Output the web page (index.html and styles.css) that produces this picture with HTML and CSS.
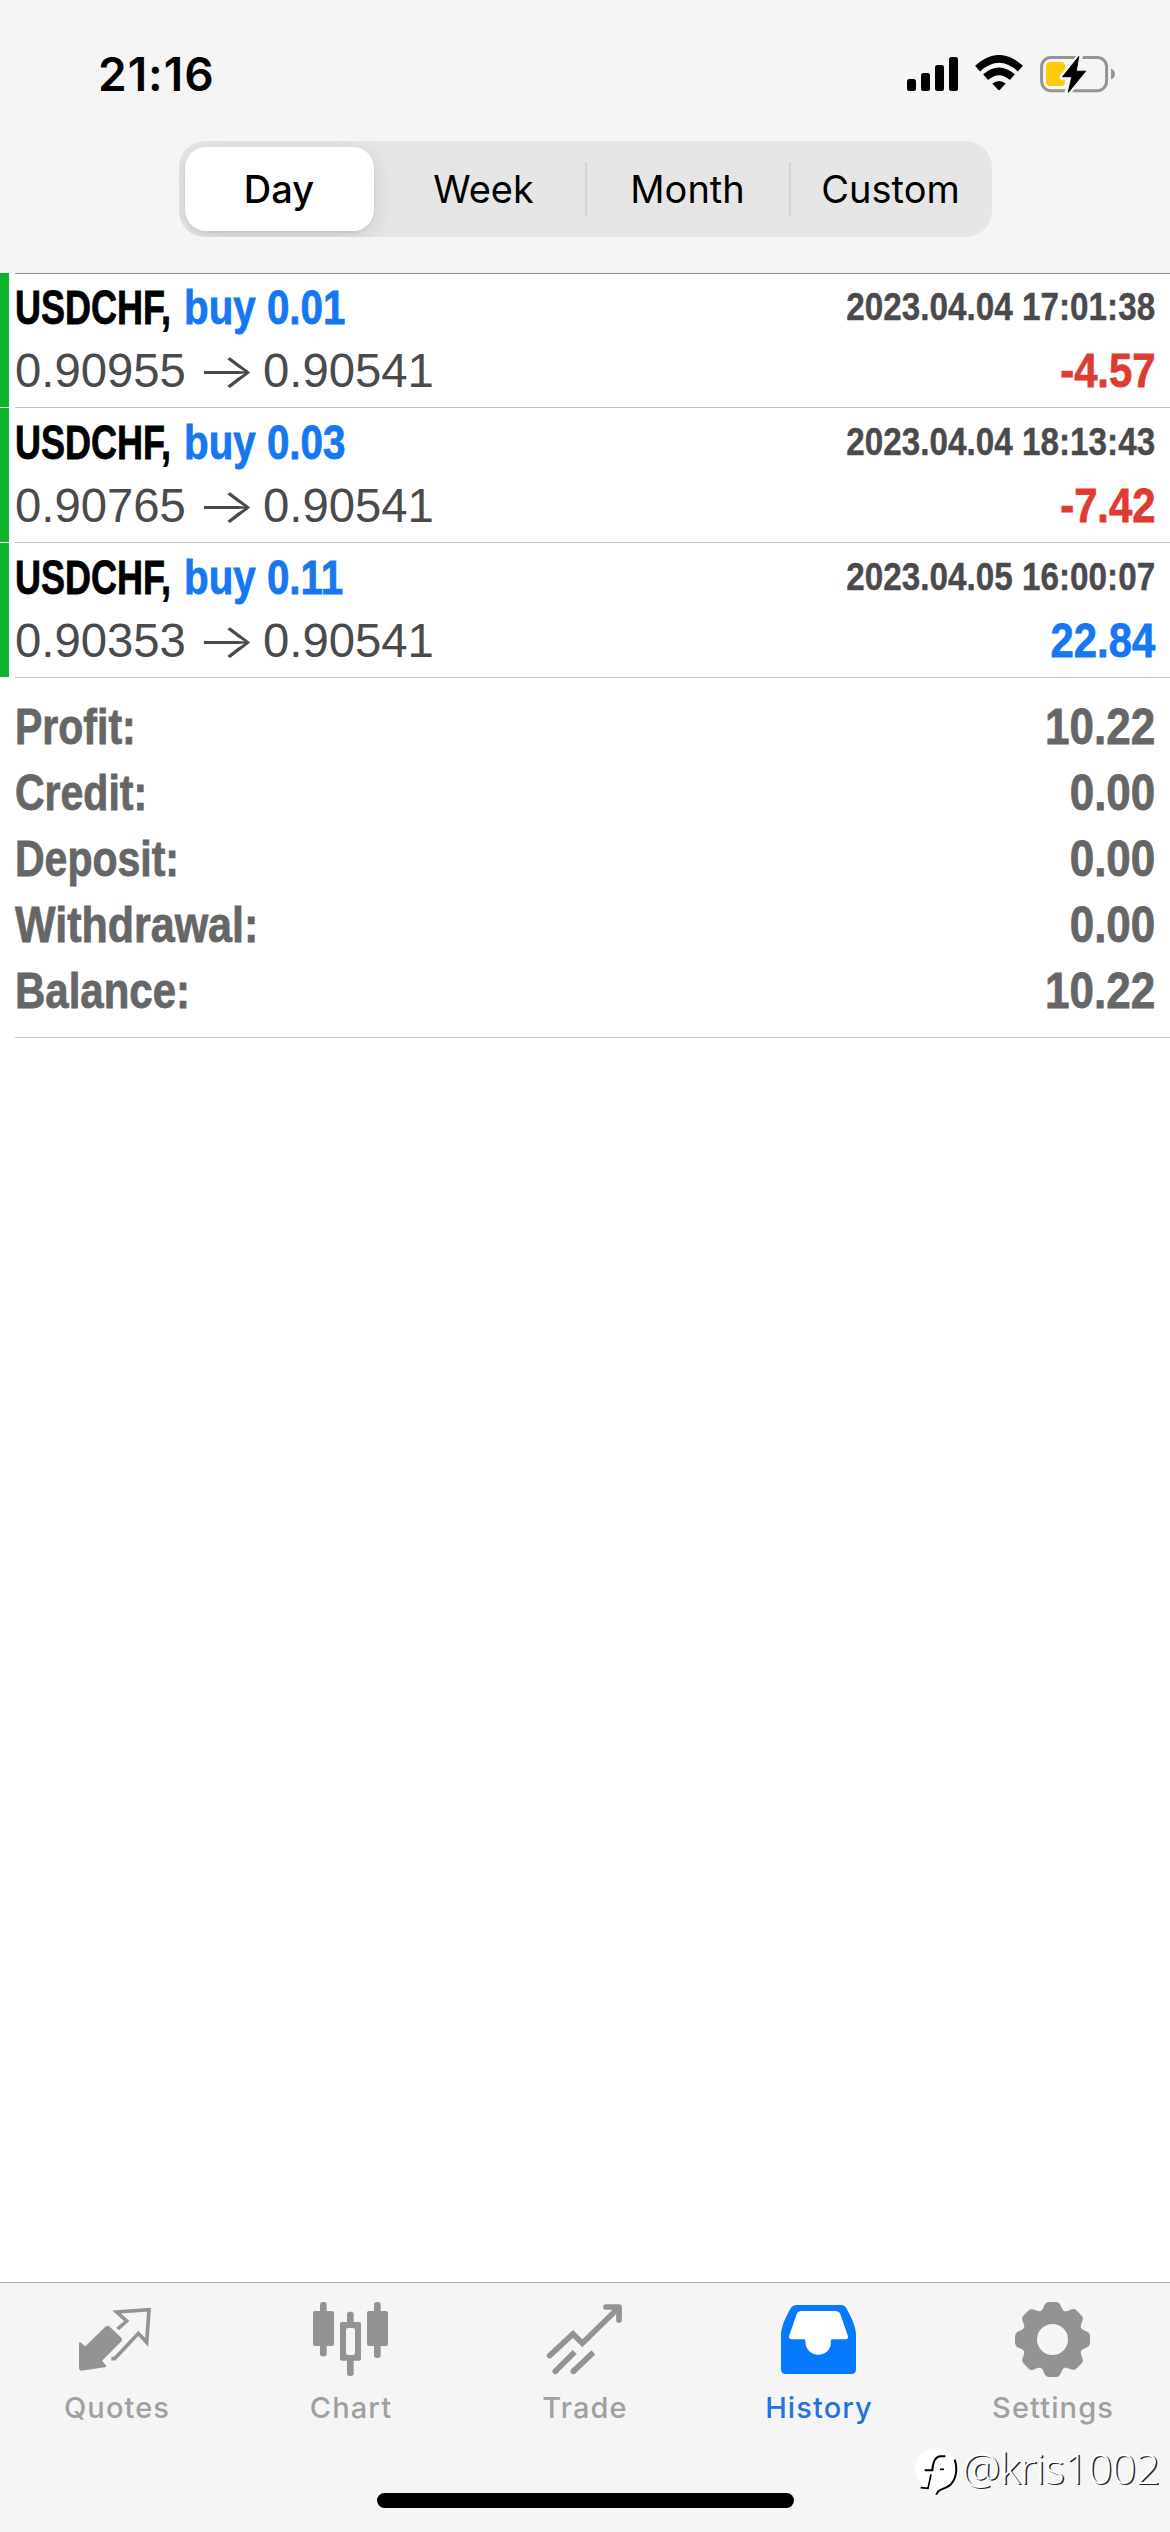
FILE: index.html
```html
<!DOCTYPE html>
<html lang="en">
<head>
<meta charset="utf-8">
<title>History</title>
<link rel="stylesheet" href="styles.css">
</head>
<body>
<div class="screen">
  <header class="topbar">
    <div class="status">
      <span class="time">21:16</span>
      <div class="status-icons">
        <svg class="signal" viewBox="0 0 51 34" width="51" height="34"><rect x="0" y="22" width="9" height="12" rx="2.5"/><rect x="14" y="16" width="9" height="18" rx="2.5"/><rect x="28" y="8" width="9" height="26" rx="2.5"/><rect x="42" y="0" width="9" height="34" rx="2.5"/></svg>
        <svg class="wifi" viewBox="0 0 48 36" width="48" height="36"><g fill="none" stroke="#000" stroke-width="7.6"><path d="M2.6 13.6Q24-5.8 45.4 13.6"/><path d="M10.6 22.2Q24 10.6 37.400 22.200"/></g><path d="M17.300 28.600Q24 23.400 30.700 28.600L25.200 34.600Q24 35.800 22.800 34.600Z"/></svg>
        <svg class="battery" viewBox="0 0 76 40" width="76" height="40"><rect x="1.600" y="3.400" width="65" height="33.400" rx="9.500" fill="none" stroke="#949494" stroke-width="3"/><path d="M71 14.500Q75 16 75 20Q75 24 71 25.500Z" fill="#949494"/><rect x="6" y="8" width="19" height="24" rx="4" fill="#fbcb0a"/><path d="M40 2L22.400 23H31.400L27.400 39L45.600 17H36.200Z" fill="#f5f5f5" stroke="#f5f5f5" stroke-width="6" stroke-linejoin="round"/><path d="M38.800 2.500L22.600 22.700H31.800L28.300 38.300L45.600 17.200H36.200Z" stroke="#000" stroke-linejoin="round"/></svg>
      </div>
    </div>
    <nav class="segments">
      <span class="segment selected">Day</span>
      <span class="segment">Week</span>
      <span class="segment ruled">Month</span>
      <span class="segment ruled">Custom</span>
    </nav>
  </header>

  <main class="content">
    <section class="deals">
      <article class="deal">
        <div class="deal-body">
          <div class="line"><span class="title"><span class="symbol">USDCHF,</span><span class="side">buy 0.01</span></span><time class="date">2023.04.04 17:01:38</time></div>
          <div class="line"><span class="prices"><span class="open">0.90955</span><span class="arrow">→</span><span class="close">0.90541</span></span><span class="result loss">-4.57</span></div>
        </div>
      </article>
      <article class="deal">
        <div class="deal-body">
          <div class="line"><span class="title"><span class="symbol">USDCHF,</span><span class="side">buy 0.03</span></span><time class="date">2023.04.04 18:13:43</time></div>
          <div class="line"><span class="prices"><span class="open">0.90765</span><span class="arrow">→</span><span class="close">0.90541</span></span><span class="result loss">-7.42</span></div>
        </div>
      </article>
      <article class="deal">
        <div class="deal-body">
          <div class="line"><span class="title"><span class="symbol">USDCHF,</span><span class="side">buy 0.11</span></span><time class="date">2023.04.05 16:00:07</time></div>
          <div class="line"><span class="prices"><span class="open">0.90353</span><span class="arrow">→</span><span class="close">0.90541</span></span><span class="result gain">22.84</span></div>
        </div>
      </article>
    </section>
    <section class="summary">
      <div class="sum-row"><span class="sum-label">Profit:</span><span class="sum-value">10.22</span></div>
      <div class="sum-row"><span class="sum-label">Credit:</span><span class="sum-value">0.00</span></div>
      <div class="sum-row"><span class="sum-label">Deposit:</span><span class="sum-value">0.00</span></div>
      <div class="sum-row"><span class="sum-label wide">Withdrawal:</span><span class="sum-value">0.00</span></div>
      <div class="sum-row"><span class="sum-label mid">Balance:</span><span class="sum-value">10.22</span></div>
    </section>
  </main>

  <footer class="tabbar">
    <nav class="tabs">
      <a class="tab"><svg viewBox="216 117 270 252" width="90" height="84"><path d="M240 246L256 259L316 200Q323 194 330 201L364 233Q369 239 363 245L306 302L319 317Q320 321 314 322L244 332Q237 332 237 325V248Z"/><path d="M353 207L380 183L350 156L447 149L440 247L415 220L344 296H334" fill="none" stroke="currentColor" stroke-width="11"/></svg><span>Quotes</span></a>
      <a class="tab"><svg viewBox="918 117 270 252" width="90" height="84"><rect x="960" y="126" width="20" height="163" rx="8"/><rect x="939" y="153" width="63" height="105" rx="6"/><rect x="1122" y="126" width="20" height="168" rx="8"/><rect x="1101" y="153" width="63" height="105" rx="6"/><rect x="1041" y="155" width="20" height="40" rx="8"/><rect x="1041" y="290" width="20" height="58" rx="8"/><path fill-rule="evenodd" d="M1025 186H1078Q1083 186 1083 191V297Q1083 302 1078 302H1025Q1020 302 1020 297V191Q1020 186 1025 186ZM1044 204Q1038 204 1038 211V278Q1038 285 1044 285H1059Q1065 285 1065 278V211Q1065 204 1059 204Z"/></svg><span>Chart</span></a>
      <a class="tab"><svg viewBox="330 117 270 252" width="90" height="84"><g fill="none" stroke="currentColor" stroke-width="17" stroke-linecap="round"><path d="M359 287L429 222L457 250L565 144"/><path d="M528 141H567V180" stroke-linejoin="round"/></g><path d="M548 140H574V170L565 168L556 158Z"/><g fill="none" stroke="currentColor" stroke-width="17"><path d="M376 334L434 276M430 334L490 277"/></g><circle cx="376" cy="334" r="8.500"/><circle cx="430" cy="334" r="8.500"/></svg><span>Trade</span></a>
      <a class="tab active"><svg viewBox="1032 117 270 252" width="90" height="84"><path d="M1100 135H1232Q1244 135 1249 145C1262 168 1278 200 1278 225V328Q1278 342 1264 342H1067Q1053 342 1053 328V225C1053 200 1069 168 1082 145Q1088 135 1100 135Z"/><path d="M1115 153H1215Q1227 153 1231 163L1253 226Q1257 238 1246 238H1205C1201 240 1203 248 1202 254C1199 272 1183 284 1165 284S1131 272 1127 254C1126 248 1127 240 1123 238H1086Q1074 238 1078 226L1100 163Q1104 153 1115 153Z" fill="#fff"/></svg><span>History</span></a>
      <a class="tab"><svg viewBox="384 117 270 252" width="90" height="84"><defs><path id="tooth" d="M470 170L484 152Q489 148 491 141Q496 126 506 126H528Q539 126 544 141Q546 148 551 152L565 170Z"/></defs><circle cx="517.500" cy="238.500" r="68" fill="none" stroke="currentColor" stroke-width="43"/><use href="#tooth"/><use href="#tooth" transform="rotate(45 517.500 238.500)"/><use href="#tooth" transform="rotate(90 517.500 238.500)"/><use href="#tooth" transform="rotate(135 517.500 238.500)"/><use href="#tooth" transform="rotate(180 517.500 238.500)"/><use href="#tooth" transform="rotate(225 517.500 238.500)"/><use href="#tooth" transform="rotate(270 517.500 238.500)"/><use href="#tooth" transform="rotate(315 517.500 238.500)"/></svg><span>Settings</span></a>
    </nav>
    <div class="home-indicator"></div>
    <div class="watermark">
      <svg viewBox="100 560 135 150" width="45" height="50"><path d="M165 564C198 564 226 588 226 624C226 654 211 678 190 684C176 688 170 692 166 700L162 684C128 684 104 660 104 626C104 590 130 564 165 564Z" fill="#fff"/><g fill="none" stroke="#000"><path d="M222 598C232 628 226 660 206 676C190 688 172 684 167 703" stroke-width="6"/><path d="M132 630H155C157 606 162 588 180 588H194" stroke-width="6"/><path d="M151 642L142 684L120 682" stroke-width="5"/><path d="M178 627H190" stroke-width="5"/></g></svg>
      <span>@kris1002</span>
    </div>
  </footer>
</div>
</body>
</html>
```
FILE: styles.css
```css
* { box-sizing: border-box; }
body { margin: 0; background: #fff; }
.screen {
  width: 1170px;
  height: 2532px;
  display: flex;
  flex-direction: column;
  overflow: hidden;
  font-family: "Liberation Sans", Arial, sans-serif;
}

/* status bar and period selector */
.topbar {
  height: 273px;
  flex: none;
  background: #f5f5f5;
  display: flex;
  flex-direction: column;
  align-items: center;
  font-family: Inter, sans-serif;
}
.status {
  width: 100%;
  height: 141px;
  padding: 54px 54px 0 98px;
  display: flex;
  justify-content: space-between;
  align-items: flex-start;
}
.time { font-size: 46px; font-weight: 600; line-height: 41px; letter-spacing: 1px; }
.status-icons { display: flex; align-items: flex-start; }
.signal { margin-top: 3px; }
.wifi { margin: 1px 0 0 17px; }
.battery { margin-left: 17px; }
.segments {
  width: 813px;
  height: 96px;
  padding: 6px 0 6px 6px;
  display: grid;
  grid-template-columns: 189px 212px 204px 1fr;
  border-radius: 26px;
  background: #e6e6e6;
}
.segment {
  display: flex;
  align-items: center;
  justify-content: center;
  position: relative;
  font-size: 38px;
  line-height: 84px;
}
.segment:nth-child(2) { padding-left: 8px; }
.segment.selected {
  border-radius: 21px;
  background: #fff;
  font-weight: 500;
  box-shadow: 0 6px 22px rgba(0, 0, 0, .12), 0 2px 3px rgba(0, 0, 0, .05);
}
.segments { overflow: hidden; }
.segment.ruled::before {
  content: "";
  position: absolute;
  left: -1px;
  top: 15px;
  width: 2px;
  height: 54px;
  background: #d2d2d3;
}

/* closed deals */
.content { flex: 1; background: #fff; }
.deal { height: 135px; padding-left: 15px; background: linear-gradient(#0fb42d, #0fb42d) 0 0 / 9px 134px no-repeat; }
.deal-body { height: 135px; padding: 3px 15px 0 0; border-bottom: 1px solid #c0c0c0; }
.deal:first-child .deal-body { box-shadow: inset 0 1px #909090; }
.line { display: flex; justify-content: space-between; height: 63px; line-height: 63px; font-size: 48px; white-space: nowrap; }
.title { display: flex; font-weight: 700; -webkit-text-stroke: .8px currentColor; }
.symbol { width: 169px; transform: scaleX(.75); transform-origin: 0 0; }
.side { color: #1577f2; transform: scaleX(.84); transform-origin: 0 0; }
.date { font-size: 39px; font-weight: 700; line-height: 61px; color: #4a4a4c; transform: scaleX(.853); transform-origin: 100% 0; -webkit-text-stroke: .4px currentColor; }
.prices { display: flex; color: #4a4a4c; }
.open, .close { transform: scaleX(.985); transform-origin: 0 0; }
.open { width: 181px; }
.arrow { width: 67px; font-family: Inter, sans-serif; font-weight: 300; transform: scaleX(1.32); transform-origin: 0 0; }
.result { font-weight: 700; transform: scaleX(.87); transform-origin: 100% 0; -webkit-text-stroke: .8px currentColor; }
.loss { color: #dd3d30; }
.gain { color: #1577f2; }

/* totals */
.summary { margin-left: 15px; padding: 16px 15px 13px 0; border-bottom: 1px solid #c6c6c6; }
.sum-row { display: flex; justify-content: space-between; font-size: 50px; line-height: 66px; font-weight: 700; color: #666; -webkit-text-stroke: .8px currentColor; }
.sum-label { transform: scaleX(.82); transform-origin: 0 0; }
.sum-label.mid { transform: scaleX(.84); }
.sum-label.wide { transform: scaleX(.86); }
.sum-value { transform: scaleX(.88); transform-origin: 100% 0; }

/* tab bar */
.tabbar { height: 250px; flex: none; position: relative; border-top: 1px solid #acacac; background: #f5f5f5; }
.tabs { display: grid; grid-template-columns: repeat(5, 1fr); height: 210px; }
.tab {
  display: flex;
  flex-direction: column;
  align-items: center;
  padding-top: 16px;
  color: #939393;
  font: 500 29px/40px Inter, sans-serif;
  letter-spacing: 1.1px;
}
.tab svg { fill: currentColor; }
.tab span { margin-top: 5px; color: #a0a0a0; }
.tab.active { color: #057aff; }
.tab.active span { color: #2474e0; }
.home-indicator { width: 417px; height: 15px; margin-left: 377px; border-radius: 8px; background: #000; }
.watermark {
  position: absolute;
  left: 914px;
  top: 164px;
  display: flex;
  color: #fff;
  font: 300 43px/42px "Open Sans", "Noto Sans", sans-serif;
  letter-spacing: -.7px;
  text-shadow: 1.5px 1px 0 #222;
}
.watermark span { margin-left: 3px; }
```
